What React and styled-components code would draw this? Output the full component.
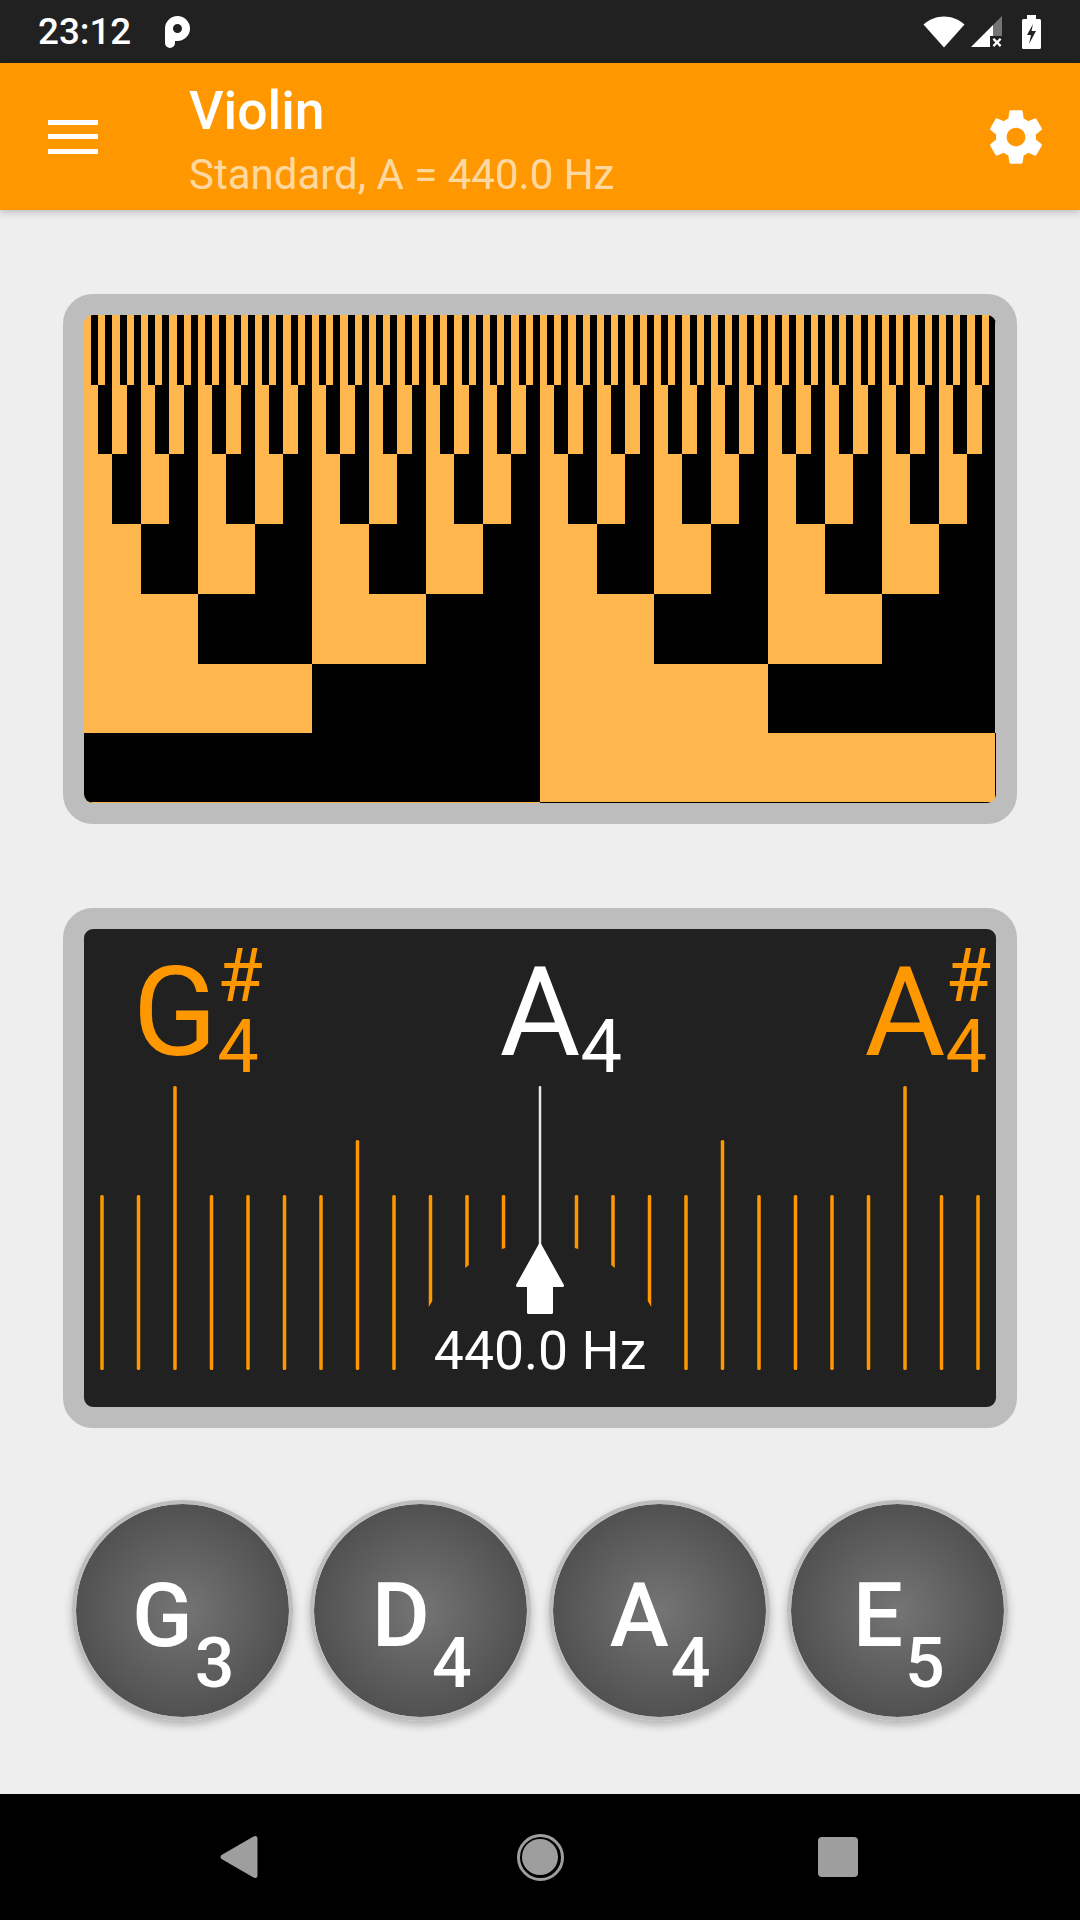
import React from 'react';
import styled, { createGlobalStyle } from 'styled-components';

const ORANGE = '#FF9800';
const AMBER = '#FFB74D';

const GlobalStyle = createGlobalStyle`
  html, body {
    margin: 0;
    padding: 0;
    background: #EEEEEE;
    font-family: Roboto, "Noto Sans", sans-serif;
  }
`;

// bit pattern: rows double in frequency going up, last row is inverted
const BIT_W = 912;
const BIT_H = 488;
const ROWS = 7;
const rowH = BIT_H / ROWS;
const snap = v => Math.ceil(v - 0.5);

const BitPattern = () => {
    const bars = [];
    for (let r = 0; r < ROWS; r++) {
        const count = 2 ** (ROWS - r);
        const w = BIT_W / count;
        const inverted = r === ROWS - 1;
        const y1 = snap(r * rowH);
        const y2 = snap((r + 1) * rowH);
        for (let i = 0; i < count; i++) {
            const lit = inverted ? i % 2 === 1 : i % 2 === 0;
            const x1 = snap(i * w);
            const x2 = snap((i + 1) * w);
            bars.push(<rect key={`${r}-${i}`} x={x1} y={y1} width={x2 - x1} height={y2 - y1} fill={lit ? AMBER : '#000'} />);
        }
    }
    return (
        <BitSvg viewBox={`0 0 ${BIT_W} ${BIT_H}`} width={BIT_W} height={BIT_H} shapeRendering="crispEdges">
            {bars}
            <rect x={BIT_W - 1} y={0} width={1} height={snap(rowH * 6)} fill={AMBER} />
            <rect x={BIT_W - 1} y={snap(rowH * 6)} width={1} height={snap(rowH)} fill="#000" />
            <rect x={0} y={BIT_H - 1} width={BIT_W / 2} height={1} fill={AMBER} />
            <rect x={BIT_W / 2} y={BIT_H - 1} width={BIT_W / 2} height={1} fill="#000" />
        </BitSvg>
    );
};

const CENTER = 456;
const STEP = 36.5;
const TICK = 3.5;
// how far the ticks next to the arrow are cut, k -> bottom y
const CUTS = { 1: [319, 320], 2: [336, 339], 3: [372, 378] };

const TunerScale = () => {
    const ticks = [];
    for (let k = -12; k <= 12; k++) {
        if (k === 0) continue;
        const abs = Math.abs(k);
        const x = CENTER + k * STEP;
        const top = abs === 10 ? 157 : abs === 5 ? 211 : 266;
        if (CUTS[abs]) {
            const [inner, outer] = CUTS[abs];
            const left = k < 0 ? outer : inner;
            const right = k < 0 ? inner : outer;
            ticks.push(
                <path key={k} fill={ORANGE} d={`M${x - TICK / 2} ${top + 1}q0-1 ${TICK / 2}-1t${TICK / 2} 1V${right}L${x - TICK / 2} ${left}z`} />
            );
        } else {
            ticks.push(<rect key={k} x={x - TICK / 2} y={top} width={TICK} height={441 - top} rx={1.5} fill={ORANGE} />);
        }
    }
    return (
        <ScaleSvg viewBox="0 0 912 478" width={912} height={478}>
            {ticks}
            <rect x={CENTER - 1.25} y={157} width={2.5} height={160} rx={1} fill="#E8E8E8" />
            <path
                d="M456 316 L478.5 356.5 H467.5 V383.5 H444.5 V356.5 H433.5 Z"
                fill="#fff"
                stroke="#fff"
                strokeWidth={3}
                strokeLinejoin="round"
            />
        </ScaleSvg>
    );
};

const NOTES = [
    { x: 91, letter: 'G', octave: 4, sharp: true, color: ORANGE },
    { x: 456, letter: 'A', octave: 4, color: '#fff' },
    { x: 821, letter: 'A', octave: 4, sharp: true, color: ORANGE },
];

const STRINGS = [
    { letter: 'G', octave: 3 },
    { letter: 'D', octave: 4 },
    { letter: 'A', octave: 4 },
    { letter: 'E', octave: 5 },
];

const App = () => {
    return (
        <Page>
            <GlobalStyle />
            <StatusBar>
                <Clock>23:12</Clock>
                <svg width="25" height="32" viewBox="0 0 25 32">
                    <path
                        fill="#fff"
                        fillRule="evenodd"
                        d="M0 12.500A12.500 12.500 0 1 1 12.500 25H10v2a5 5 0 0 1-10 0zM12.500 8a4.500 4.500 0 1 0 0 9 4.500 4.500 0 0 0 0-9z"
                    />
                </svg>
                <StatusIcons>
                    <svg width="42" height="32" viewBox="0 0 42 32">
                        <path fill="#fff" d="M21 31.500 .5 8.500C6 3.500 13 .5 21 .5s15 3 20.500 8z" />
                    </svg>
                    <svg width="31" height="32" viewBox="0 0 31 32">
                        <path fill="#fff" d="M0 31 22 9v11h-3v11z" />
                        <path fill="#757575" d="M22 9 31 0v20h-9z" />
                        <path fill="#fff" d="M20.500 20.600l1.700-1.700 2.800 2.800 2.800-2.800 1.700 1.700-2.800 2.800 2.800 2.800-1.700 1.700-2.800-2.800-2.800 2.800-1.700-1.700 2.800-2.800z" transform="translate(1 3)" />
                    </svg>
                    <svg width="19" height="34" viewBox="0 0 19 34">
                        <path
                            fill="#fff"
                            fillRule="evenodd"
                            d="M5 0h9v4h3.500A1.500 1.500 0 0 1 19 5.500v27a1.500 1.500 0 0 1-1.500 1.500h-16A1.500 1.500 0 0 1 0 32.500v-27A1.500 1.500 0 0 1 1.500 4H5zM11 9 5 20h4l-2 9 7-13h-4.500z"
                        />
                    </svg>
                </StatusIcons>
            </StatusBar>

            <Toolbar>
                <MenuButton>
                    <MenuBar />
                    <MenuBar />
                    <MenuBar />
                </MenuButton>
                <TitleBlock>
                    <Title>Violin</Title>
                    <Subtitle>Standard, A = 440.0 Hz</Subtitle>
                </TitleBlock>
                <GearIcon viewBox="0 0 24 24" width="64" height="64">
                    <path
                        fill="#fff"
                        d="M19.43 12.98c.04-.32.07-.64.07-.98s-.03-.66-.07-.98l2.11-1.65c.19-.15.24-.42.12-.64l-2-3.46c-.12-.22-.39-.3-.61-.22l-2.49 1c-.52-.4-1.08-.73-1.69-.98l-.38-2.65C14.46 2.18 14.25 2 14 2h-4c-.25 0-.46.18-.49.42l-.38 2.65c-.61.25-1.17.59-1.69.98l-2.49-1c-.23-.09-.49 0-.61.22l-2 3.46c-.13.22-.07.49.12.64l2.11 1.65c-.04.32-.07.65-.07.98s.03.66.07.98l-2.11 1.65c-.19.15-.24.42-.12.64l2 3.46c.12.22.39.3.61.22l2.49-1c.52.4 1.08.73 1.69.98l.38 2.65c.03.24.24.42.49.42h4c.25 0 .46-.18.49-.42l.38-2.65c.61-.25 1.17-.59 1.69-.98l2.49 1c.23.09.49 0 .61-.22l2-3.46c.12-.22.07-.49-.12-.64l-2.11-1.65zM12 15.5c-1.93 0-3.5-1.57-3.5-3.5s1.57-3.5 3.5-3.5 3.5 1.57 3.5 3.5-1.57 3.5-3.5 3.5z"
                    />
                </GearIcon>
            </Toolbar>

            <Main>
                <BitFrame>
                    <BitPattern />
                </BitFrame>

                <TunerFrame>
                    <TunerCanvas>
                        <TunerScale />
                        {NOTES.map((note, index) => (
                            <NoteMark key={index} $x={note.x} $color={note.color}>
                                {note.letter}
                                {note.sharp && <Sharp>#</Sharp>}
                                <NoteOctave>{note.octave}</NoteOctave>
                            </NoteMark>
                        ))}
                        <Frequency>440.0 Hz</Frequency>
                    </TunerCanvas>
                </TunerFrame>

                <StringRow>
                    {STRINGS.map((s, index) => (
                        <StringButton key={index}>
                            <StringLabel>
                                <StringLetter>{s.letter}</StringLetter>
                                <StringOctave>{s.octave}</StringOctave>
                            </StringLabel>
                        </StringButton>
                    ))}
                </StringRow>
            </Main>

            <NavBar>
                <BackIcon width="38" height="44" viewBox="0 0 38 44">
                    <path fill="#9E9E9E" d="M1.500 20 33.500 1.500Q37.500 0 37.500 4v36q0 4-4 2.500L1.500 24Q-.5 22 1.500 20z" />
                </BackIcon>
                <HomeRing>
                    <HomeDot />
                </HomeRing>
                <RecentSquare />
            </NavBar>
        </Page>
    );
};

export default App;

const Page = styled.div`
    width: 1080px;
    height: 1920px;
    display: flex;
    flex-direction: column;
    background: #EEEEEE;
    overflow: hidden;
`;

const StatusBar = styled.div`
    height: 63px;
    flex-shrink: 0;
    display: flex;
    align-items: center;
    background: #212121;
    padding: 0 39px 0 38px;
    box-sizing: border-box;
`;

const Clock = styled.div`
    width: 127px;
    color: #fff;
    font-size: 36.75px;
    font-weight: 500;
    line-height: 63px;
`;

const StatusIcons = styled.div`
    margin-left: auto;
    display: flex;
    align-items: center;
    gap: 6px;
    svg:last-child {
        margin-left: 14px;
    }
`;

const Toolbar = styled.div`
    height: 147px;
    flex-shrink: 0;
    display: flex;
    align-items: center;
    background: ${ORANGE};
    padding: 0 32px 0 48px;
    box-sizing: border-box;
    position: relative;
    z-index: 1;
    box-shadow: 0 2px 8px rgba(0, 0, 0, 0.22);
`;

const MenuButton = styled.div`
    width: 50px;
    display: flex;
    flex-direction: column;
    gap: 9.5px;
`;

const MenuBar = styled.div`
    height: 5px;
    background: #fff;
`;

const TitleBlock = styled.div`
    margin: 9px 0 0 91px;
    display: flex;
    flex-direction: column;
`;

const Title = styled.div`
    color: #fff;
    font-size: 53.5px;
    font-weight: 500;
    line-height: 62px;
`;

const Subtitle = styled.div`
    margin-top: 5px;
    color: rgba(255, 255, 255, 0.65);
    font-size: 42px;
    line-height: 56px;
`;

const GearIcon = styled.svg`
    margin-left: auto;
    display: block;
`;

const Main = styled.div`
    flex: 1;
    display: flex;
    flex-direction: column;
    padding: 84px 63px 0;
`;

const Frame = styled.div`
    border: 21px solid #BDBDBD;
    border-radius: 30px;
    overflow: hidden;
`;

const BitFrame = styled(Frame)`
    height: 488px;
    background: ${AMBER};
`;

const BitSvg = styled.svg`
    display: block;
`;

const TunerFrame = styled(Frame)`
    height: 478px;
    margin-top: 84px;
    background: #212121;
`;

const TunerCanvas = styled.div`
    position: relative;
    height: 100%;
`;

const ScaleSvg = styled.svg`
    display: block;
`;

const NoteMark = styled.div`
    position: absolute;
    left: ${p => p.$x}px;
    top: 21.7px;
    transform: translateX(-50%);
    color: ${p => p.$color};
    font-size: 124px;
    line-height: 1;
`;

const Sharp = styled.span`
    position: absolute;
    left: 100%;
    top: -12px;
    font-size: 74px;
    line-height: 1;
`;

const NoteOctave = styled.span`
    position: absolute;
    left: 100%;
    top: 59px;
    font-size: 74px;
    line-height: 1;
`;

const Frequency = styled.div`
    position: absolute;
    left: 0;
    right: 0;
    top: 394.6px;
    text-align: center;
    color: #fff;
    font-size: 53.5px;
    line-height: 1;
`;

const StringRow = styled.div`
    display: grid;
    grid-template-columns: repeat(4, 1fr);
    justify-items: center;
    margin-top: 72px;
`;

const StringButton = styled.div`
    width: 221px;
    height: 221px;
    box-sizing: border-box;
    border: 4px solid #BDBDBD;
    border-radius: 50%;
    display: flex;
    align-items: center;
    justify-content: center;
    background: radial-gradient(circle, #757575 0%, #424242 100%);
    background-clip: padding-box;
    box-shadow: 0 4px 8px rgba(0, 0, 0, 0.25);
`;

const StringLabel = styled.div`
    display: flex;
    align-items: flex-start;
    padding: 9px 0 0 2px;
    color: #fff;
    font-weight: 500;
`;

const StringLetter = styled.span`
    font-size: 89px;
    line-height: 1;
`;

const StringOctave = styled.span`
    font-size: 70px;
    line-height: 1;
    margin: 57px 0 -38px 2px;
`;

const NavBar = styled.div`
    height: 126px;
    flex-shrink: 0;
    background: #000;
    display: flex;
    align-items: center;
    padding-left: 219.5px;
`;

const BackIcon = styled.svg`
    display: block;
`;

const HomeRing = styled.div`
    width: 47px;
    height: 47px;
    margin-left: 259px;
    box-sizing: border-box;
    border: 3px solid #9E9E9E;
    border-radius: 50%;
    display: flex;
    align-items: center;
    justify-content: center;
`;

const HomeDot = styled.div`
    width: 36px;
    height: 36px;
    border-radius: 50%;
    background: #9E9E9E;
`;

const RecentSquare = styled.div`
    width: 40px;
    height: 40px;
    margin-left: 254.5px;
    border-radius: 4px;
    background: #9E9E9E;
`;
